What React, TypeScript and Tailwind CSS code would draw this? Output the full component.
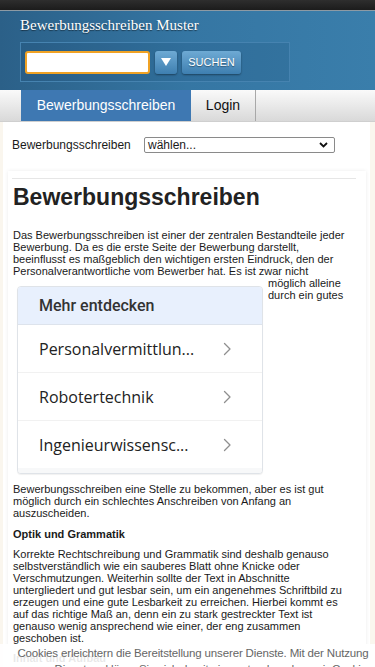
import React from "react";

const Chevron = () => (
  <svg width="10" height="14" viewBox="0 0 10 14" fill="none">
    <path d="M2.5 1.5 L8 7 L2.5 12.5" stroke="#8f8f8f" strokeWidth="1.3" strokeLinecap="round" strokeLinejoin="round" />
  </svg>
);

export default function App() {
  const items = ["Personalvermittlun...", "Robotertechnik", "Ingenieurwissensc..."];
  return (
    <div className="relative w-[375px] h-[667px] overflow-hidden bg-[#faf6ee] font-['Liberation_Sans',Arial,sans-serif] text-[#1a1a1a]">
      {/* top dark bar */}
      <div className="h-[11px] bg-gradient-to-b from-[#2e2e2e] to-[#1c1c1c] border-b border-[#8d9aa4]" />
      {/* header */}
      <div className="h-[79px] bg-gradient-to-r from-[#2b6088] via-[#3576a3] to-[#3a7eab] pl-[20px] pt-[4px]">
        <div className="font-['Liberation_Serif',serif] text-[15px] leading-[20px] text-white [text-shadow:0_1px_1px_rgba(0,0,0,0.5)]">
          Bewerbungsschreiben Muster
        </div>
        <div className="mt-[7px] w-[270px] h-[40px] border border-[#4683b0] bg-[rgba(20,60,100,0.12)] flex items-center gap-[5px] pl-[4px]">
          <div className="w-[125px] h-[23px] rounded-[3px] border-2 border-[#f0a224] bg-white" />
          <div className="w-[22px] h-[23px] rounded-[3px] bg-gradient-to-b from-[#6eaad4] to-[#3e7fb0] shadow-[0_1px_2px_rgba(0,0,0,0.4)] flex items-center justify-center">
            <svg width="10" height="8" viewBox="0 0 10 8"><path d="M0 0 H10 L5 8 Z" fill="white" /></svg>
          </div>
          <div className="w-[59px] h-[23px] rounded-[3px] bg-gradient-to-b from-[#6eaad4] to-[#3e7fb0] shadow-[0_1px_2px_rgba(0,0,0,0.4)] flex items-center justify-center text-[11px] text-white [text-shadow:0_1px_1px_rgba(0,0,0,0.4)]">
            SUCHEN
          </div>
        </div>
      </div>
      {/* nav */}
      <div className="h-[32px] bg-gradient-to-b from-[#fafafa] to-[#d9d9d9] flex pl-[21px] border-b border-[#cfcfcf]">
        <div className="w-[170px] h-full bg-[#3e78b2] text-white text-[14px] flex items-center justify-center">
          Bewerbungsschreiben
        </div>
        <div className="w-[65px] h-full border-r border-[#a8a8a8] text-[14px] text-[#111] flex items-center justify-center">
          Login
        </div>
      </div>
      {/* content */}
      <div className="ml-[3px] mr-[5px] bg-white h-[560px] relative">
        <div className="flex items-center pt-[14px] pl-[9px]">
          <span className="text-[12px] w-[132px]">Bewerbungsschreiben</span>
          <div className="w-[191px] h-[16px] border border-[#8a8a8a] rounded-[2px] flex items-center justify-between pl-[3px] pr-[6px] text-[12px]">
            <span>wählen...</span>
            <svg width="9" height="6" viewBox="0 0 9 6"><path d="M1 1 L4.5 4.5 L8 1" stroke="#111" strokeWidth="1.8" fill="none" /></svg>
          </div>
        </div>
        <div className="mt-[17px] ml-[5px] mr-[4px] bg-white shadow-[0_0_4px_rgba(0,0,0,0.08)] pl-[5px] pr-[10px]">
          <div className="h-[7px]" />
          <div className="border-t border-[#e6e6e6] -ml-[1px]" />
          <h1 className="mt-[4px] text-[23px] leading-[28px] font-bold text-[#222]">Bewerbungsschreiben</h1>
          <div className="mt-[18px] mr-[6px] text-[11px] leading-[12px] text-[#1a1a1a]">
            <p>
              Das Bewerbungsschreiben ist einer der zentralen Bestandteile jeder Bewerbung. Da es die erste Seite der Bewerbung darstellt, beeinflusst es maßgeblich den wichtigen ersten Eindruck, den der Personalverantwortliche vom Bewerber hat. Es ist zwar nicht
            </p>
            <div className="flex items-start">
              <div className="ml-[4px] mt-[9px] w-[246px] rounded-[4px] border border-[#dfe3e8] overflow-hidden bg-white shadow-[0_1px_1px_rgba(0,0,0,0.06)]">
                <div className="h-[38px] bg-[#e8f0fd] border-b border-[#dde3ec] flex items-center pl-[21px] font-['Roboto',sans-serif] text-[16px] font-medium text-[#333]">
                  Mehr entdecken
                </div>
                {items.map((t, i) => (
                  <div key={t} className={`h-[47px] flex items-center pl-[21px] pr-[30px] ${i < 2 ? "border-b border-[#f1f1f1] box-content" : ""}`}>
                    <span className="flex-1 font-['Open_Sans',sans-serif] text-[16px] text-[#222]">{t}</span>
                    <Chevron />
                  </div>
                ))}
                <div className="h-[5px] bg-[#f7f8f9]" />
              </div>
              <div className="ml-[5px] w-[78px] text-[11px] leading-[12px]">
                <div>möglich alleine</div>
                <div>durch ein gutes</div>
              </div>
            </div>
            <p className="mt-[9px]">
              Bewerbungsschreiben eine Stelle zu bekommen, aber es ist gut möglich durch ein schlechtes Anschreiben von Anfang an auszuscheiden.
            </p>
            <h3 className="mt-[9px] font-bold text-[11px] leading-[12px]">Optik und Grammatik</h3>
            <p className="mt-[8px]">
              Korrekte Rechtschreibung und Grammatik sind deshalb genauso selbstverständlich wie ein sauberes Blatt ohne Knicke oder Verschmutzungen. Weiterhin sollte der Text in Abschnitte untergliedert und gut lesbar sein, um ein angenehmes Schriftbild zu erzeugen und eine gute Lesbarkeit zu erreichen. Hierbei kommt es auf das richtige Maß an, denn ein zu stark gestreckter Text ist genauso wenig ansprechend wie einer, der eng zusammen geschoben ist.
            </p>
            <h3 className="mt-[8px] font-bold text-[11px] leading-[12px]">Inhalt und Aufbau</h3>
          </div>
        </div>
      </div>
      {/* cookie bar */}
      <div className="absolute left-0 right-0 top-[644px] h-[30px] bg-[rgba(255,255,255,0.9)] text-center text-[11.5px] tracking-[-0.15px] leading-[16px] text-[#666] pt-[1px] pl-[11px]">
        Cookies erleichtern die Bereitstellung unserer Dienste. Mit der Nutzung unserer Dienste erklären Sie sich damit einverstanden, dass wir Cookies verwenden.
      </div>
    </div>
  );
}
